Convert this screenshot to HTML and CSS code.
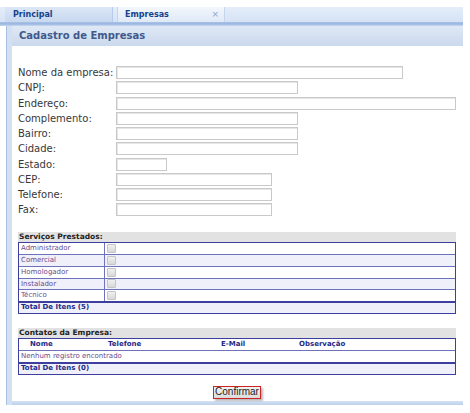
FILE: index.html
```html
<!DOCTYPE html>
<html lang="pt">
<head>
<meta charset="utf-8">
<link rel="stylesheet" href="styles.css">
</head>
<body>
<div class="app">
  <div class="tabstrip">
    <div class="tab tab-inactive">Principal</div>
    <div class="tab tab-active">Empresas<span class="close">×</span></div>
  </div>
  <div class="strip-line"></div>
  <div class="panel">
    <div class="panel-header">Cadastro de Empresas</div>
    <div class="panel-body">
      <div class="form">
        <label>Nome da empresa:</label><span class="input w-nome"></span>
        <label>CNPJ:</label><span class="input w-mid"></span>
        <label>Endereço:</label><span class="input w-end"></span>
        <label>Complemento:</label><span class="input w-mid"></span>
        <label>Bairro:</label><span class="input w-mid"></span>
        <label>Cidade:</label><span class="input w-mid"></span>
        <label>Estado:</label><span class="input w-uf"></span>
        <label>CEP:</label><span class="input w-short"></span>
        <label>Telefone:</label><span class="input w-short"></span>
        <label>Fax:</label><span class="input w-short"></span>
      </div>

      <div class="section services">
        <div class="section-title">Serviços Prestados:</div>
        <div class="grid">
          <div class="row"><span class="cell-name">Administrador</span><span class="cell-check"><span class="check"></span></span></div>
          <div class="row alt"><span class="cell-name">Comercial</span><span class="cell-check"><span class="check"></span></span></div>
          <div class="row"><span class="cell-name">Homologador</span><span class="cell-check"><span class="check"></span></span></div>
          <div class="row alt"><span class="cell-name">Instalador</span><span class="cell-check"><span class="check"></span></span></div>
          <div class="row"><span class="cell-name">Técnico</span><span class="cell-check"><span class="check"></span></span></div>
          <div class="row total">Total De Itens (5)</div>
        </div>
      </div>

      <div class="section contacts">
        <div class="section-title">Contatos da Empresa:</div>
        <div class="grid">
          <div class="row head">
            <span class="c1">Nome</span><span class="c2">Telefone</span><span class="c3">E-Mail</span><span class="c4">Observação</span>
          </div>
          <div class="row empty">Nenhum registro encontrado</div>
          <div class="row total">Total De Itens (0)</div>
        </div>
      </div>

      <div class="actions">
        <button class="btn">Confirmar</button>
      </div>
    </div>
    <div class="panel-footer"></div>
  </div>
</div>
</body>
</html>
```

FILE: styles.css
```css
html, body {
  margin: 0;
  padding: 0;
  background: #ffffff;
}

.app {
  width: 463px;
  padding-top: 7px;
  font-family: "DejaVu Sans", Verdana, sans-serif;
}

.tabstrip {
  display: flex;
  height: 15px;
  padding-left: 5px;
  gap: 4px;
  background: linear-gradient(#e4edf9, #d6e3f5);
}

.tab {
  width: 108px;
  box-sizing: border-box;
  height: 15px;
  padding-left: 8px;
  font-size: 8px;
  font-weight: bold;
  line-height: 15px;
  color: #15428b;
  position: relative;
}

.tab-inactive {
  background: linear-gradient(#dce7f6, #c7d8f0);
  border-right: 1px solid #b5cbe9;
}

.tab-active {
  background: linear-gradient(#f3f7fd, #dfe9f7);
  padding-left: 7px;
  color: #15428b;
  border-left: 1px solid #c4d5ec;
  border-right: 1px solid #c4d5ec;
}

.close {
  position: absolute;
  right: 5px;
  top: 0;
  font-size: 9px;
  font-weight: normal;
  color: #8aa3c8;
}

.strip-line {
  height: 4px;
  background: linear-gradient(#a9c2e6, #99b5df 50%, #cbdaf0);
}

.panel {
  margin-left: 7px;
  border-left: 5px solid #d3e0f2;
  box-shadow: -1px 0 0 #a6bfe3;
}

.panel-header {
  height: 20px;
  padding-left: 7px;
  font-size: 10px;
  font-weight: bold;
  line-height: 20px;
  color: #3f5a8c;
  background: linear-gradient(#dfe8f5, #cbd9ee);
}

.panel-body {
  background: #ffffff;
  height: 355px;
  padding: 19px 0 0 6px;
  box-sizing: border-box;
}

.form {
  display: grid;
  grid-template-columns: 98px auto;
  grid-auto-rows: 15.25px;
  align-items: center;
  justify-items: start;
}

.form label {
  font-size: 10px;
  color: #383838;
  line-height: 13px;
}

.input {
  display: block;
  height: 13px;
  box-sizing: border-box;
  border: 1px solid #c9c9c9;
  box-shadow: inset 1px 1px 0 #e6e6e6;
  background: #ffffff;
}

.w-nome { width: 287px; }
.w-mid { width: 182px; }
.w-end { width: 340px; }
.w-uf { width: 51px; }
.w-short { width: 156px; }

.section {
  width: 438px;
}

.services {
  margin-top: 14px;
}

.contacts {
  margin-top: 14px;
}

.section-title {
  height: 10px;
  background: #e2e2e2;
  font-size: 7.5px;
  font-weight: bold;
  line-height: 10px;
  color: #222222;
  padding-left: 1px;
}

.grid {
  border: 1.5px solid #3c3f9d;
  box-sizing: border-box;
}

.row {
  display: flex;
  height: 11.7px;
  box-sizing: border-box;
  border-top: 1px solid #6e72bc;
  font-size: 7px;
  line-height: 10.5px;
  color: #6a4a8c;
  background: #ffffff;
}

.row:first-child {
  border-top: none;
}

.row.alt {
  background: #f0f0fb;
}

.cell-name {
  width: 86px;
  padding-left: 2px;
  box-sizing: border-box;
  border-right: 1px solid #6e72bc;
}

.cell-check {
  display: flex;
  align-items: center;
  padding-left: 2px;
}

.check {
  display: block;
  width: 7px;
  height: 7px;
  border: 1px solid #c4c4c4;
  border-radius: 1px;
  background: linear-gradient(#f0f0f0, #d8d8d8);
}

.row.total {
  border-top: 2px solid #3c3f9d;
  background: #f0f0fb;
  font-weight: bold;
  color: #1e2a86;
  padding-left: 2px;
  line-height: 9.5px;
}

.row.head {
  font-weight: bold;
  color: #1e2a86;
}

.row.head span {
  display: block;
}

.c1 { width: 89px; padding-left: 11px; box-sizing: border-box; }
.c2 { width: 113px; }
.c3 { width: 78px; }
.c4 { flex: 1; }

.row.empty {
  padding-left: 2px;
}

.contacts .row.total {
  height: 11.5px;
}

.actions {
  display: flex;
  justify-content: center;
  margin-top: 11px;
  padding-right: 7px;
}

.btn {
  font-family: "Liberation Sans", Arial, sans-serif;
  font-size: 10px;
  color: #222222;
  height: 13px;
  padding: 0 1px;
  line-height: 10px;
  border: 1.5px solid #cc2222;
  background: linear-gradient(#f2f2f2, #dcdcdc);
  box-shadow: 2px 2px 2px #b8b8b8;
  border-radius: 0;
}

.panel-footer {
  height: 4px;
  background: linear-gradient(#d4e1f3, #bdd0ec);
}
```
